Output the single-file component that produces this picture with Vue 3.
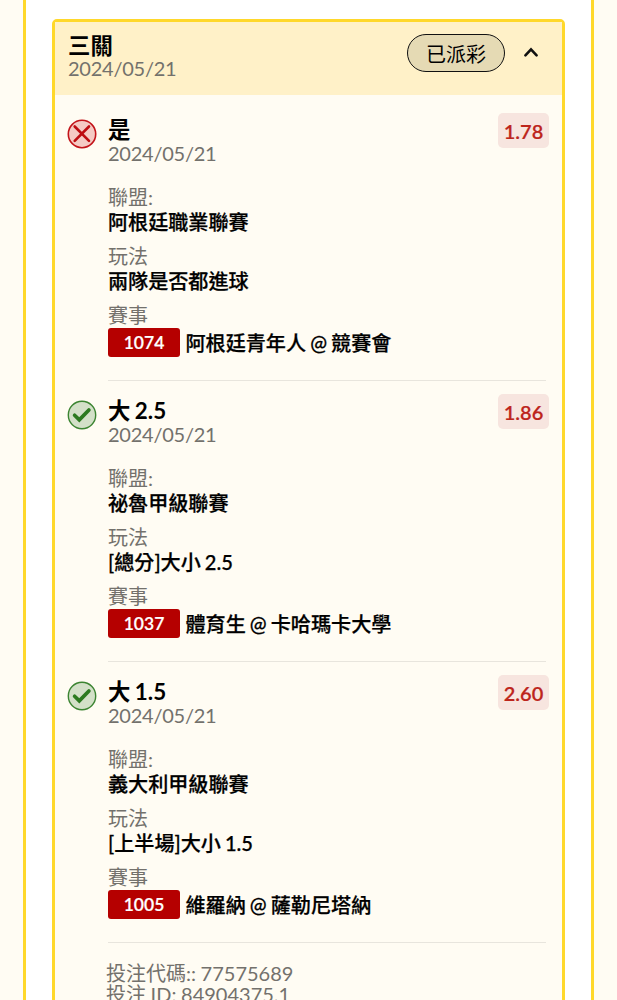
<script setup>
const legs = [
  { won: false, title: '是', date: '2024/05/21', odds: '1.78', league: '阿根廷職業聯賽', play: '兩隊是否都進球', code: '1074', match: '阿根廷青年人 @ 競賽會' },
  { won: true, title: '大 2.5', date: '2024/05/21', odds: '1.86', league: '祕魯甲級聯賽', play: '[總分]大小 2.5', code: '1037', match: '體育生 @ 卡哈瑪卡大學' },
  { won: true, title: '大 1.5', date: '2024/05/21', odds: '2.60', league: '義大利甲級聯賽', play: '[上半場]大小 1.5', code: '1005', match: '維羅納 @ 薩勒尼塔納' },
]
</script>

<template>
  <div class="page">
    <main class="panel">
      <section class="card">
        <header class="head">
          <div class="head-text">
            <div class="title">三關</div>
            <div class="date">2024/05/21</div>
          </div>
          <span class="status">已派彩</span>
          <svg class="chevron" width="16" height="12" viewBox="0 0 16 12">
            <path d="M2.400 9.400 8 3.400l5.600 6" fill="none" stroke="#111" stroke-width="2.600" stroke-linecap="round" />
          </svg>
        </header>
        <div class="legs">
          <article v-for="leg in legs" :key="leg.code" class="leg">
            <svg class="mark" width="30" height="30" viewBox="0 0 30 30">
              <template v-if="leg.won">
                <circle cx="15" cy="15" r="13.700" fill="#d3e0c8" stroke="#3b8431" stroke-width="1.400" />
                <path d="M7.600 15.200 12.300 19.800l9.600-9.800" fill="none" stroke="#2c7a20" stroke-width="3.700" stroke-linecap="round" stroke-linejoin="miter" />
              </template>
              <template v-else>
                <circle cx="15" cy="15" r="13.700" fill="#f5cac4" stroke="#c3141a" stroke-width="1.600" />
                <path d="M7.700 7.500 22 21.800M22 7.500 7.700 21.800" fill="none" stroke="#bd0c10" stroke-width="2.600" stroke-linecap="round" />
              </template>
            </svg>
            <div class="body">
              <div class="top">
                <div>
                  <div class="title">{{ leg.title }}</div>
                  <div class="date">{{ leg.date }}</div>
                </div>
                <span class="odds">{{ leg.odds }}</span>
              </div>
              <div class="label">聯盟:</div>
              <div class="value">{{ leg.league }}</div>
              <div class="label">玩法</div>
              <div class="value">{{ leg.play }}</div>
              <div class="label">賽事</div>
              <div class="match">
                <span class="code">{{ leg.code }}</span>
                <span class="teams">{{ leg.match }}</span>
              </div>
            </div>
          </article>
        </div>
        <footer class="foot">
          <div>投注代碼:: 77575689</div>
          <div>投注 ID: 84904375.1</div>
        </footer>
      </section>
    </main>
  </div>
</template>

<style>
body {
  margin: 0;
}
</style>

<style scoped>
.page {
  box-sizing: border-box;
  height: 1000px;
  overflow: hidden;
  padding: 0 23px;
  background: #fffcf3;
  font-family: Lato, "Noto Sans CJK TC", sans-serif;
  font-size: 20px;
  color: #000;
  white-space: nowrap;
}
.panel {
  box-sizing: border-box;
  height: 1040px;
  padding: 19px 26px 0;
  border: solid #ffd82b;
  border-width: 0 3px;
  background: #fff;
}
.card {
  box-sizing: border-box;
  height: 1020px;
  border: 3px solid #ffd82b;
  border-radius: 5px;
  background: #fffcf3;
}
.head {
  display: flex;
  box-sizing: border-box;
  height: 73px;
  padding: 12px 23px 0 13px;
  background: #fff1c8;
}
.head-text {
  flex: 1;
}
.title {
  height: 24px;
  line-height: 24px;
  font-size: 22.400px;
  font-weight: 700;
  word-spacing: -1px;
}
.date {
  height: 22px;
  line-height: 22px;
  font-size: 20px;
  letter-spacing: -0.250px;
  color: #73716c;
}
.head .date {
  line-height: 21px;
}
.status {
  box-sizing: border-box;
  width: 98px;
  height: 38px;
  border: 1.500px solid #111;
  border-radius: 19px;
  background: #e5dab4;
  line-height: 38px;
  text-align: center;
}
.chevron {
  margin: 12px 0 0 18px;
}
.legs {
  padding-top: 5px;
}
.leg {
  display: flex;
  gap: 11px;
  box-sizing: border-box;
  height: 281px;
  padding: 18px 13px 0 12px;
}
.mark {
  flex: none;
  margin-top: 0.700px;
}
.body {
  flex: 1;
  height: 262px;
  border-bottom: 1.500px solid #e8e5dd;
  margin-right: 3px;
}
.top {
  display: flex;
  justify-content: space-between;
  height: 67px;
  margin-right: -3px;
}
.odds {
  width: 51px;
  height: 35px;
  margin-top: -5px;
  border-radius: 5px;
  background: #f7e5df;
  color: #bd251c;
  font-weight: 600;
  line-height: 36px;
  text-align: center;
  -webkit-text-stroke: 0.200px;
}
.label {
  height: 25px;
  line-height: 25px;
  color: #73716c;
}
.value {
  height: 25px;
  margin-bottom: 9px;
  line-height: 25px;
  font-size: 20.100px;
  font-weight: 500;
  word-spacing: -1px;
  -webkit-text-stroke: 0.250px;
}
.match {
  display: flex;
  gap: 5.500px;
}
.code {
  width: 72px;
  height: 29px;
  border-radius: 3px;
  background: #b50000;
  color: #fff;
  font-size: 17.500px;
  font-weight: 600;
  line-height: 30px;
  text-align: center;
  -webkit-text-stroke: 0.200px;
}
.teams {
  line-height: 31px;
  font-size: 20.100px;
  font-weight: 500;
  word-spacing: -1px;
  -webkit-text-stroke: 0.250px;
}
.foot {
  padding: 20px 0 0 51px;
  color: #73716c;
  line-height: 21px;
  word-spacing: -0.500px;
}
</style>
